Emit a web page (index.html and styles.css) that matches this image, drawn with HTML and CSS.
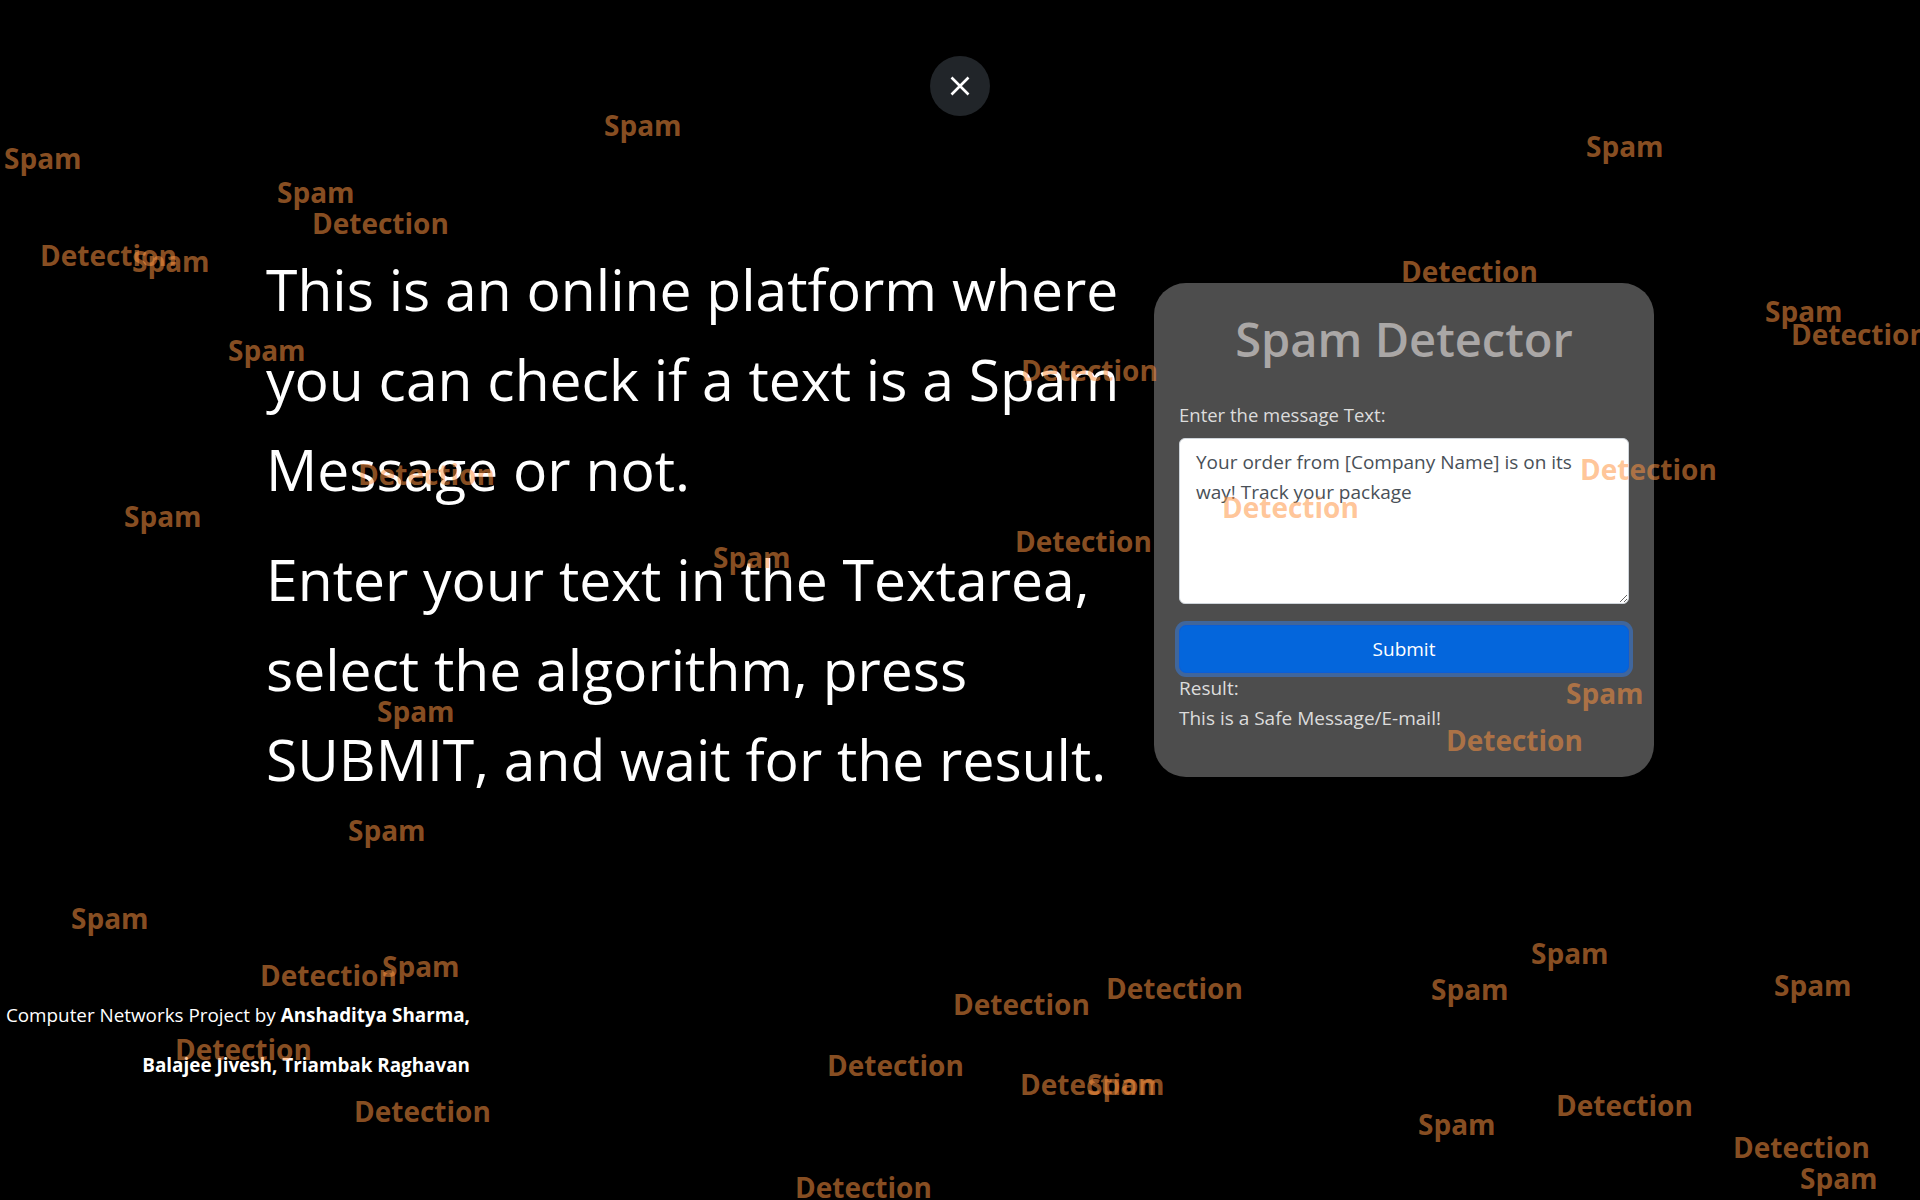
FILE: index.html
```html
<!DOCTYPE html>
<html lang="en">
<head>
<meta charset="utf-8">
<title>Spam Detector</title>
<link rel="stylesheet" href="styles.css">
</head>
<body>
  <button class="close-btn" type="button" aria-label="Close">
    <svg width="60" height="60" viewBox="0 0 60 60" aria-hidden="true">
      <path d="M21.5 21.5 L38.5 38.5 M38.5 21.5 L21.5 38.5" stroke="#fff" stroke-width="2.6" fill="none"/>
    </svg>
  </button>

  <main class="hero">
    <div class="intro">
      <p>This is an online platform where you can check if a text is a Spam Message or not.</p>
      <p>Enter your text in the Textarea, select the algorithm, press SUBMIT, and wait for the result.</p>
    </div>

    <form class="card">
      <h1 class="card-title">Spam Detector</h1>
      <label class="field-label" for="msg">Enter the message Text:</label>
      <textarea id="msg" class="field-input">Your order from [Company Name] is on its way! Track your package</textarea>
      <button class="submit-btn" type="button">Submit</button>
      <div class="result">
        <div>Result:</div>
        <div>This is a Safe Message/E-mail!</div>
      </div>
    </form>
  </main>

  <footer class="credits">
    Computer Networks Project by <b>Anshaditya Sharma,</b> <b>Balajee Jivesh, Triambak Raghavan</b>
  </footer>

  <div class="floating-words" aria-hidden="true">
    <span class="word" style="left:4px;top:141px">Spam</span>
    <span class="word" style="left:604px;top:108px">Spam</span>
    <span class="word" style="left:277px;top:175px">Spam</span>
    <span class="word" style="left:312px;top:206px">Detection</span>
    <span class="word" style="left:40px;top:238px">Detection</span>
    <span class="word" style="left:132px;top:244px">Spam</span>
    <span class="word" style="left:228px;top:333px">Spam</span>
    <span class="word" style="left:1021px;top:353px">Detection</span>
    <span class="word" style="left:358px;top:457px">Detection</span>
    <span class="word" style="left:124px;top:499px">Spam</span>
    <span class="word" style="left:713px;top:540px">Spam</span>
    <span class="word" style="left:1015px;top:524px">Detection</span>
    <span class="word" style="left:377px;top:694px">Spam</span>
    <span class="word" style="left:348px;top:813px">Spam</span>
    <span class="word" style="left:71px;top:901px">Spam</span>
    <span class="word" style="left:260px;top:958px">Detection</span>
    <span class="word" style="left:382px;top:949px">Spam</span>
    <span class="word" style="left:175px;top:1032px">Detection</span>
    <span class="word" style="left:354px;top:1094px">Detection</span>
    <span class="word" style="left:795px;top:1170px">Detection</span>
    <span class="word" style="left:827px;top:1048px">Detection</span>
    <span class="word" style="left:953px;top:987px">Detection</span>
    <span class="word" style="left:1106px;top:971px">Detection</span>
    <span class="word" style="left:1020px;top:1067px">Detection</span>
    <span class="word" style="left:1087px;top:1067px">Spam</span>
    <span class="word" style="left:1531px;top:936px">Spam</span>
    <span class="word" style="left:1431px;top:972px">Spam</span>
    <span class="word" style="left:1774px;top:968px">Spam</span>
    <span class="word" style="left:1556px;top:1088px">Detection</span>
    <span class="word" style="left:1418px;top:1107px">Spam</span>
    <span class="word" style="left:1733px;top:1130px">Detection</span>
    <span class="word" style="left:1800px;top:1161px">Spam</span>
    <span class="word" style="left:1586px;top:129px">Spam</span>
    <span class="word" style="left:1401px;top:254px">Detection</span>
    <span class="word" style="left:1765px;top:294px">Spam</span>
    <span class="word" style="left:1791px;top:317px">Detection</span>
    <span class="word" style="left:1580px;top:452px">Detection</span>
    <span class="word" style="left:1222px;top:490px">Detection</span>
    <span class="word" style="left:1566px;top:676px">Spam</span>
    <span class="word" style="left:1446px;top:723px">Detection</span>
  </div>
</body>
</html>
```

FILE: styles.css
```css
* {
  box-sizing: border-box;
}

html, body {
  margin: 0;
  padding: 0;
}

body {
  position: relative;
  width: 1920px;
  height: 1200px;
  overflow: hidden;
  background: #000;
  color: #fff;
  font-family: "Open Sans", "Noto Sans", sans-serif;
  display: flex;
  flex-direction: column;
}

.close-btn {
  display: block;
  width: 60px;
  height: 60px;
  margin: 56px auto 0;
  padding: 0;
  border: 0;
  border-radius: 50%;
  background: #212529;
  cursor: pointer;
}

.close-btn svg {
  display: block;
}

.hero {
  display: flex;
  justify-content: center;
  align-items: center;
  gap: 8px;
  margin-top: 128px;
}

.intro {
  width: 880px;
  padding-bottom: 12px;
}

.intro p {
  margin: 0;
  font-size: 57px;
  line-height: 90px;
  font-weight: 400;
  color: #fff;
}

.intro p + p {
  margin-top: 20px;
}

.card {
  width: 500px;
  flex: none;
  padding: 25px 25px 44px;
  border-radius: 32px;
  background: #4d4d4d;
  display: flex;
  flex-direction: column;
}

.card-title {
  margin: 3px 0 31px;
  font-size: 47px;
  line-height: 57.6px;
  font-weight: 600;
  text-align: center;
  color: #aaa7a6;
}

.field-label {
  display: block;
  font-size: 18.5px;
  line-height: 30px;
  color: #dcdcdc;
  margin-bottom: 8px;
}

.field-input {
  display: block;
  width: 100%;
  height: 166px;
  padding: 8px 16px;
  border: 1px solid #ced4da;
  border-radius: 6px;
  background: #fff;
  color: #495057;
  font-family: inherit;
  font-size: 19px;
  line-height: 30px;
  resize: vertical;
}

.submit-btn {
  display: block;
  width: 100%;
  height: 48px;
  margin-top: 21px;
  padding: 0 16px;
  border: 1px solid #0b5ed7;
  border-radius: 7px;
  background: #0466dc;
  color: #fff;
  font-family: inherit;
  font-size: 19px;
  line-height: 30px;
  box-shadow: 0 0 0 4px rgba(49, 132, 253, 0.45);
}

.result {
  font-size: 19px;
  line-height: 30px;
  color: #dcdcdc;
}

.credits {
  width: 470px;
  margin-top: 174px;
  font-size: 18.85px;
  line-height: 50px;
  text-align: right;
  color: #fff;
}

.credits b {
  font-weight: 700;
}

.floating-words {
  position: absolute;
  inset: 0;
  pointer-events: none;
  z-index: 5;
}

.word {
  position: absolute;
  font-family: "Open Sans", "Noto Sans", sans-serif;
  font-weight: 700;
  font-size: 28px;
  line-height: 34px;
  white-space: nowrap;
  color: rgba(255, 148, 65, 0.54);
}
```
